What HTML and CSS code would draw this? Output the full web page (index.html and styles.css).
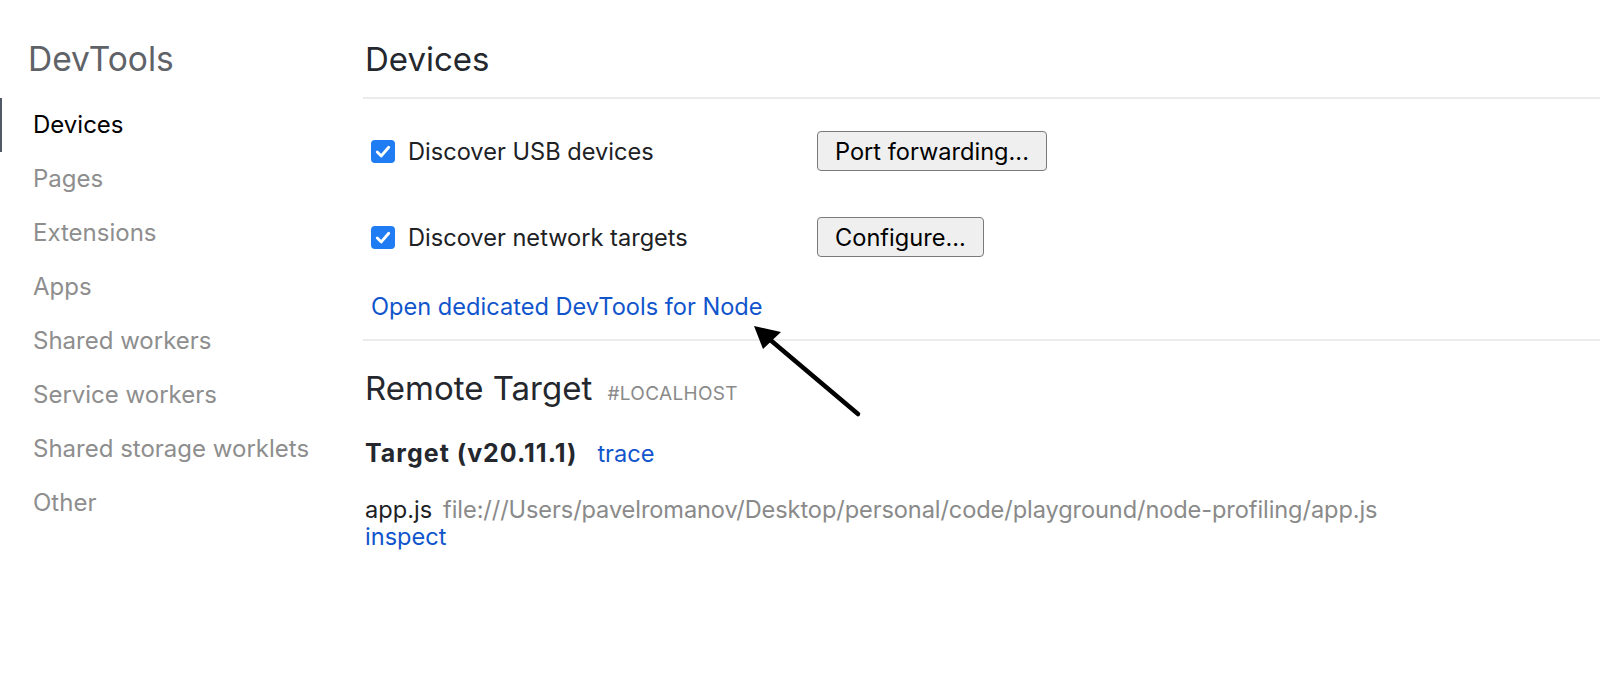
FILE: index.html
```html
<!DOCTYPE html>
<html>
<head>
<meta charset="utf-8">
<link rel="stylesheet" href="styles.css">
</head>
<body>
<div class="page">
  <aside class="sidebar">
    <div class="brand">DevTools</div>
    <nav class="nav">
      <div class="nav-item active">Devices</div>
      <div class="nav-item">Pages</div>
      <div class="nav-item">Extensions</div>
      <div class="nav-item">Apps</div>
      <div class="nav-item">Shared workers</div>
      <div class="nav-item">Service workers</div>
      <div class="nav-item">Shared storage worklets</div>
      <div class="nav-item">Other</div>
    </nav>
  </aside>
  <main class="main">
    <section class="devices">
      <h1 class="heading">Devices</h1>
      <div class="options">
        <div class="option-row">
          <label class="check-label"><span class="checkbox"><svg viewBox="0 0 24 24" width="24" height="23"><path d="M6 12.5 L10.2 16.6 L18 7.6" fill="none" stroke="#fff" stroke-width="3" stroke-linecap="round" stroke-linejoin="round"/></svg></span><span>Discover USB devices</span></label>
          <button class="btn">Port forwarding...</button>
        </div>
        <div class="option-row">
          <label class="check-label"><span class="checkbox"><svg viewBox="0 0 24 24" width="24" height="23"><path d="M6 12.5 L10.2 16.6 L18 7.6" fill="none" stroke="#fff" stroke-width="3" stroke-linecap="round" stroke-linejoin="round"/></svg></span><span>Discover network targets</span></label>
          <button class="btn">Configure...</button>
        </div>
        <a class="link node-link">Open dedicated DevTools for Node</a>
      </div>
    </section>
    <section class="remote">
      <h2 class="heading remote-heading">Remote Target <span class="tag">#LOCALHOST</span></h2>
      <div class="target-title"><span class="target-name">Target (v20.11.1)</span><a class="link trace">trace</a></div>
      <div class="target-item">
        <div><span class="item-name">app.js</span><span class="item-url">file:///Users/pavelromanov/Desktop/personal/code/playground/node-profiling/app.js</span></div>
        <a class="link">inspect</a>
      </div>
    </section>
  </main>
</div>
<svg class="arrow" width="1600" height="677" viewBox="0 0 1600 677">
  <line x1="858" y1="414" x2="768" y2="338" stroke="#000" stroke-width="4.5" stroke-linecap="round"/>
  <polygon points="754,326 781,332 763,349" fill="#000"/>
</svg>
</body>
</html>
```

FILE: styles.css
```css
html, body {
  margin: 0;
  padding: 0;
  background: #fff;
}
body {
  font-family: "Inter", "Liberation Sans", sans-serif;
  color: #202124;
  width: 1600px;
  height: 677px;
  overflow: hidden;
}
.page {
  display: grid;
  grid-template-columns: 363px 1fr;
}
.sidebar {
  padding-top: 37px;
}
.brand {
  font-size: 33.5px;
  line-height: 44px;
  color: #5f6368;
  padding-left: 28px;
}
.nav {
  margin-top: 17px;
}
.nav-item {
  font-size: 24px;
  line-height: 54px;
  height: 54px;
  color: #8e8e8e;
  padding-left: 31px;
  border-left: 3px solid transparent;
  margin-left: -1px;
}
.nav-item.active {
  color: #000;
  border-left-color: #515866;
}
.main {
  padding-top: 39px;
}
.heading {
  margin: 0;
  font-size: 33px;
  line-height: 40px;
  font-weight: 400;
  color: #24282e;
  padding-left: 2px;
}
.devices .heading {
  padding-bottom: 18px;
  border-bottom: 2px solid #ebebeb;
}
.options {
  padding: 32px 0 18px 8px;
  border-bottom: 2px solid #ebebeb;
}
.option-row {
  display: grid;
  grid-template-columns: 446px auto;
  justify-content: start;
  align-items: center;
  height: 40px;
  margin-bottom: 46px;
}
.option-row:last-of-type {
  margin-bottom: 0;
}
.check-label {
  display: flex;
  align-items: center;
  font-size: 23.6px;
  line-height: 29px;
  color: #202124;
}
.checkbox {
  width: 24px;
  height: 23px;
  border-radius: 4px;
  background: #1f7cf2;
  margin-right: 13px;
  display: flex;
}
.btn {
  font-family: "Inter", "Liberation Sans", sans-serif;
  font-size: 23.6px;
  height: 40px;
  padding: 0 17px;
  background: #efefef;
  border: 1px solid #7a7a7a;
  border-radius: 4px;
  color: #000;
}
.link {
  color: #1155cc;
  font-size: 23.6px;
  line-height: 27px;
  text-decoration: none;
}
.node-link {
  display: block;
  margin-top: 35px;
  line-height: 29px;
  padding-left: 0;
}
.remote {
  padding-top: 27px;
  padding-left: 2px;
}
.remote-heading {
  padding-left: 0;
}
.tag {
  font-size: 19px;
  color: #8a8a8a;
  margin-left: 6px;
  letter-spacing: 0.3px;
}
.target-title {
  margin-top: 25px;
  font-size: 25px;
  line-height: 29px;
}
.target-name {
  font-weight: 700;
  color: #24282e;
  letter-spacing: 1px;
}
.trace {
  margin-left: 20px;
  line-height: 29px;
}
.target-item {
  margin-top: 28px;
  font-size: 23.6px;
  line-height: 27px;
}
.item-name {
  color: #202124;
}
.item-url {
  color: #8a8a8a;
  margin-left: 11px;
  letter-spacing: -0.1px;
}
.target-item .link {
  display: block;
}
.arrow {
  position: absolute;
  top: 0;
  left: 0;
  pointer-events: none;
}
```
